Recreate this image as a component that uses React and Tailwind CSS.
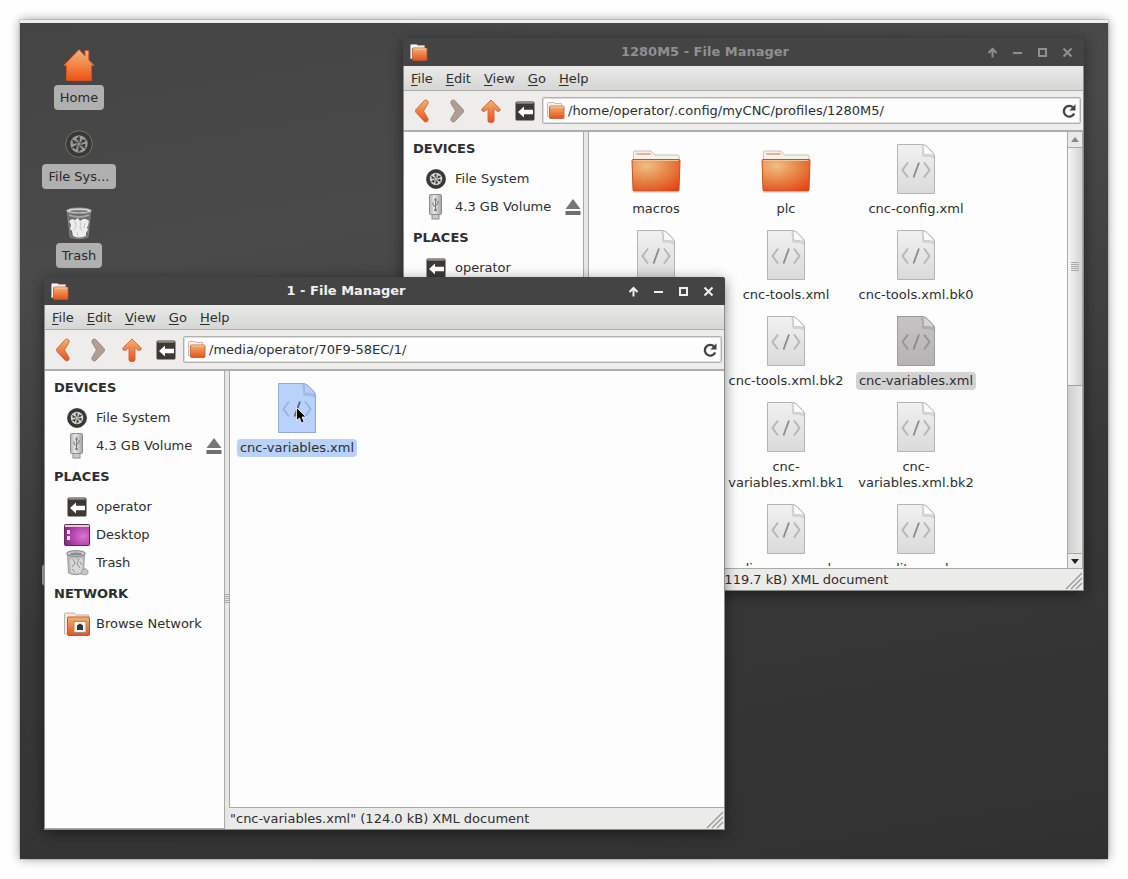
import clsx from "clsx";

function IconDefs() {
  return (
    <svg className="absolute h-0 w-0" aria-hidden="true">
      <defs>
        <linearGradient id="orange" x1="0" y1="0" x2="0" y2="1">
          <stop offset="0" stopColor="#f3b272" />
          <stop offset="1" stopColor="#e8501c" />
        </linearGradient>
        <radialGradient id="folderFront" cx="0.3" cy="0.2" r="1">
          <stop offset="0" stopColor="#f0bf85" />
          <stop offset="0.5" stopColor="#e58243" />
          <stop offset="0.85" stopColor="#e8511f" />
          <stop offset="1" stopColor="#d8431a" />
        </radialGradient>
        <linearGradient id="homeFill" x1="0" y1="0" x2="0" y2="1">
          <stop offset="0" stopColor="#eeb480" />
          <stop offset="0.55" stopColor="#f08242" />
          <stop offset="1" stopColor="#ee4f17" />
        </linearGradient>
        <linearGradient id="page" x1="0" y1="0" x2="0" y2="1">
          <stop offset="0" stopColor="#f1f1f1" />
          <stop offset="1" stopColor="#dadada" />
        </linearGradient>
        <linearGradient id="pageDark" x1="0" y1="0" x2="0" y2="1">
          <stop offset="0" stopColor="#c6c4c5" />
          <stop offset="1" stopColor="#b5b3b4" />
        </linearGradient>
        <linearGradient id="metal" x1="0" y1="0" x2="1" y2="0">
          <stop offset="0" stopColor="#b4b4b4" />
          <stop offset="0.4" stopColor="#e8e8e8" />
          <stop offset="1" stopColor="#a2a2a2" />
        </linearGradient>
        <radialGradient id="screen" cx="0.75" cy="0.55" r="0.8">
          <stop offset="0" stopColor="#d977cc" />
          <stop offset="0.6" stopColor="#b33fae" />
          <stop offset="1" stopColor="#7a2c80" />
        </radialGradient>
      </defs>
    </svg>
  );
}

function FolderIcon() {
  return (
    <svg width="52" height="46" viewBox="0 0 52 46">
      <path d="M3.500 12V4q0-1 1-1H20q1 0 2 1l3 3h23q1 0 1 1v5z" fill="#f7f1ee" stroke="#c9c0bb" />
      <rect x="6" y="5" width="15" height="2" rx="1" fill="#e0b79d" />
      <path d="M2 12.500q0-1 1-1h46q1 0 1 1L49 42q0 1-1 1H4q-1 0-1-1z" fill="url(#folderFront)" stroke="#c9501f" />
      <path d="M3.500 12.500h45" stroke="#f3c295" />
      <path d="M3 44.500h46" stroke="#000" strokeOpacity=".12" />
    </svg>
  );
}

function SmallFolderIcon() {
  return (
    <svg width="18" height="17" viewBox="0 0 18 17">
      <path d="M.500 14.500V1.500q0-1 1-1h5l1.500 1h6.500v13z" fill="#f7f2ef" stroke="#b9aca5" strokeWidth=".8" />
      <path d="M2.500 5q0-1 1-1h12.500q1 0 1 1v10.500q0 1-1 1H3.500q-1 0-1-1z" fill="url(#orange)" stroke="#b95830" strokeWidth=".8" />
      <path d="M3.500 5h13" stroke="#f6cfa8" />
    </svg>
  );
}

function XmlIcon({ tone }) {
  const fill = tone === "blue" ? "#b9d2fb" : tone === "dark" ? "url(#pageDark)" : "url(#page)";
  const edge = tone === "blue" ? "#8fa9d0" : tone === "dark" ? "#9b999a" : "#b4b4b4";
  const ink = tone === "blue" ? "#9db6dd" : tone === "dark" ? "#979596" : "#b7b7b7";
  const fold = tone === "blue" ? "#b4cdf7" : tone === "dark" ? "#d6d5d5" : "#fbfbfb";
  return (
    <svg width="40" height="50" viewBox="0 0 40 50">
      <path d="M1.500 .500H26q3 0 5 2l5.500 5.500q2 2 2 4v37.500h-37z" fill={fill} stroke={edge} />
      <path d="M26 2q1 2 1 4v4.500q0 1.500 1.500 1.500H33q3 0 5 2" fill="none" stroke="#000" strokeOpacity=".1" strokeWidth="2" />
      <path d="M26 1q1.500 1.500 1.500 4v4q0 1.500 1.500 1.500h4q3 0 5 1.500-.500-2.500-2-4L31 3q-2-2-5-2z" fill={fold} stroke={edge} strokeWidth=".6" />
      <path d="M12 18.500L6.500 26l5.500 7.500M28 18.500l5.500 7.500-5.500 7.500" fill="none" stroke={ink} strokeWidth="2" />
      <path d="M23 18.500l-5.500 15" stroke={tone === "blue" ? "#55637e" : "#8a8a8a"} strokeWidth="1.800" />
    </svg>
  );
}

function WheelIcon({ size = 20, faded }) {
  return (
    <svg width={size} height={size} viewBox="0 0 20 20">
      <circle cx="10" cy="10" r="9.500" fill="#3a3834" stroke={faded ? "#77756f" : "#2c2a27"} strokeWidth=".7" />
      <circle cx="10" cy="10" r="6.200" fill={faded ? "#9a9893" : "#d9d8d3"} />
      <circle cx="10" cy="10" r="3.600" fill="none" stroke="#3a3834" strokeWidth="2" strokeDasharray="1.800 1.970" />
      <path d="M10 4.500V15.500M5.200 7.200l9.600 5.600M5.200 12.800l9.600-5.600" stroke="#3a3834" strokeWidth=".8" />
      <circle cx="10" cy="10" r="1.100" fill={faded ? "#9a9893" : "#d9d8d3"} />
    </svg>
  );
}

function UsbIcon() {
  return (
    <svg width="16" height="26" viewBox="0 0 16 26">
      <rect x="1.500" y=".500" width="12" height="20" rx="1" fill="url(#metal)" stroke="#8d8d8d" />
      <rect x="4" y="20.500" width="7" height="4.500" fill="#c9c9c9" stroke="#8d8d8d" />
      <path d="M7.500 16V5M7.500 13L5 11V8.500M7.500 11.500L10 9.500V7" fill="none" stroke="#777" />
      <circle cx="7.500" cy="16" r="1.300" fill="#777" />
      <path d="M6 6.500l1.500-3 1.500 3z" fill="#777" />
    </svg>
  );
}

function EjectIcon() {
  return (
    <svg width="16" height="18" viewBox="0 0 16 18">
      <path d="M8 1l7.500 10H.500z" fill="#777" />
      <rect x=".500" y="13" width="15" height="4" fill="#6f6f6f" />
    </svg>
  );
}

function HomeFolderIcon() {
  return (
    <svg width="20" height="20" viewBox="0 0 20 20">
      <rect x=".500" y=".500" width="19" height="19" rx="1.500" fill="#3c3935" />
      <path d="M1.500 1h17v1.800h-17z" fill="#8e8a83" />
      <path d="M3 11l6-5.500v3.300h9v4.400H9v3.300z" fill="#fff" />
    </svg>
  );
}

function DesktopIcon() {
  return (
    <svg width="26" height="22" viewBox="0 0 26 22">
      <rect x=".500" y=".500" width="25" height="21" rx="1" fill="url(#screen)" stroke="#5e2a60" />
      <path d="M1 1h24v2H1z" fill="#ddd4c6" />
      <path d="M3 6h3v4H3zM3 12h3v4H3z" fill="#f0dff0" />
    </svg>
  );
}

function TrashIcon() {
  return (
    <svg width="24" height="26" viewBox="0 0 24 26">
      <path d="M2.500 4l1 19q7 3.500 15 0l1-19z" fill="#bdbdbd" stroke="#8a8a8a" strokeWidth=".8" />
      <path d="M5 10l4-2 3 2 4-2 2 2-1 12q-5 2-11 0z" fill="#d8d8d8" />
      <path d="M8 9l2 4-3 4M14 9l-2 5 3 4M7 19l3 3M15 12l2 3" stroke="#8e8e8e" fill="none" />
      <path d="M17 20l3-1.500 3 2v3L20 25l-4-1z" fill="#c4c4c4" stroke="#8e8e8e" strokeWidth=".7" />
      <ellipse cx="11" cy="3.500" rx="9.500" ry="2.800" fill="#c9c9c9" stroke="#7d7d7d" />
      <ellipse cx="11" cy="3.800" rx="6.500" ry="1.200" fill="#8a8a8a" />
    </svg>
  );
}

function BigTrashIcon() {
  return (
    <svg width="28" height="33" viewBox="0 0 28 33">
      <path d="M2.500 5l2.500 25q9 3.500 18 0l2.500-25z" fill="#8a8d8c" fillOpacity=".5" stroke="#8f9190" strokeWidth=".8" />
      <path d="M4 8q10 4 20 0" stroke="#c7c9c8" strokeOpacity=".6" fill="none" strokeWidth="2" />
      <path d="M4 14l3-2 3 1 3-2 2 3 3-2 3 0 3 2-1 5-1 1 1 3-2 3v3q-7 3-13 0l-1-5-2-2 1-4z" fill="#ececec" />
      <path d="M10 14l1 5-2 4M16 15l-1 5 2 4M12 25l1 4M20 16l-1 5" stroke="#c4c4c4" fill="none" />
      <ellipse cx="14" cy="3.800" rx="12.500" ry="2.800" fill="#d3d5d4" stroke="#9a9c9b" strokeWidth=".8" />
      <ellipse cx="14" cy="4.200" rx="9" ry="1.300" fill="#7b7d7c" />
    </svg>
  );
}

function NetworkIcon() {
  return (
    <svg width="26" height="24" viewBox="0 0 26 24">
      <path d="M.500 22V2q0-1 1-1H10l2 2h12.500v18z" fill="#f1ebe6" stroke="#bdb0a8" />
      <path d="M3.500 6q0-1 1-1h20q1 0 1 1v16.500q0 1-1 1h-20q-1 0-1-1z" fill="url(#orange)" stroke="#c4562b" />
      <rect x="10" y="9.500" width="12" height="11" fill="#f5f3ef" stroke="#9a8f86" />
      <path d="M13 18v-4.500l3-2 3 2V18z" fill="#35322f" />
    </svg>
  );
}

function HouseIcon() {
  return (
    <svg width="32" height="34" viewBox="0 0 32 34">
      <path d="M16 1.500L.800 17.500H3.500V32.500H28.500V17.500H31.200L25.800 12V2.500H22v5.500z" fill="url(#homeFill)" stroke="#d9541f" strokeWidth=".9" strokeLinejoin="round" />
    </svg>
  );
}

function BackIcon({ forward }) {
  return (
    <svg width="14" height="24" viewBox="0 0 14 24" className={forward ? "rotate-180" : ""}>
      <path
        d="M9.500 1.300L1 10.500q-1 1.500 0 3l8.500 9.200q1.500.800 3-.500 1-1.200.500-2.700L8.500 12l4.500-7.500q.500-1.500-.500-2.700-1.500-1.300-3-.500z"
        fill={forward ? "#b09d93" : "url(#orange)"}
        stroke={forward ? "#98857b" : "#c8683a"}
        strokeWidth=".9"
      />
    </svg>
  );
}

function UpIcon() {
  return (
    <svg width="20" height="24" viewBox="0 0 20 24">
      <path d="M10 1L.800 10q-.500 2.500 2.500 2.500l3.700-3V22q0 1.500 3 1.500t3-1.500V9.500l3.700 3q3 0 2.500-2.500z" fill="url(#orange)" stroke="#c8683a" strokeWidth=".9" strokeLinejoin="round" />
    </svg>
  );
}

function ReloadIcon() {
  return (
    <svg width="14" height="14" viewBox="0 0 14 14">
      <path d="M11 3.300A5.400 5.400 0 1 0 12.200 9.500" fill="none" stroke="#444" strokeWidth="2.300" />
      <path d="M13.500 .300v6.200H7.300z" fill="#444" />
    </svg>
  );
}

const titleButtons = [
  { label: "Shade", path: "M5.500 10.500V3M1.500 6l4-4 4 4" },
  { label: "Minimize", path: "M1 6h9" },
  { label: "Maximize", path: "M2 2h7v7h-7z" },
  { label: "Close", path: "M1.500 1.500l8 8M9.500 1.500l-8 8" },
];

function TitleBar({ title, active }) {
  return (
    <header className={clsx("flex h-7 shrink-0 items-center bg-[#444] pr-1 pl-[7px]", active ? "text-[#f0f0f0]" : "text-[#909090]")}>
      <div className="w-5">
        <SmallFolderIcon />
      </div>
      <h1 className="flex-1 text-center text-[13px] leading-4 font-bold">{title}</h1>
      {titleButtons.map((button) => (
        <button key={button.label} aria-label={button.label} className="flex h-7 w-[25px] items-center justify-center">
          <svg width="11" height="11" viewBox="0 0 11 11" fill="none" stroke="currentColor" strokeWidth="2">
            <path d={button.path} />
          </svg>
        </button>
      ))}
    </header>
  );
}

function MenuBar() {
  return (
    <nav className="flex h-[25px] shrink-0 items-center gap-[13px] border-b border-[#adadaa] bg-linear-to-b from-[#eaeae9] to-[#d6d6d4] px-[7px] pt-0.5">
      {["File", "Edit", "View", "Go", "Help"].map((item) => (
        <button key={item}>
          <span className="underline underline-offset-2">{item[0]}</span>
          {item.slice(1)}
        </button>
      ))}
    </nav>
  );
}

function ToolBar({ path }) {
  return (
    <div className="flex h-[39px] shrink-0 items-center bg-[#eeedec] pr-0.5">
      <button aria-label="Back" className="flex w-[35px] justify-center">
        <BackIcon />
      </button>
      <button aria-label="Forward" className="flex w-[35px] justify-center">
        <BackIcon forward />
      </button>
      <button aria-label="Up" className="flex w-[33px] justify-center">
        <UpIcon />
      </button>
      <button aria-label="Home" className="flex w-[35px] justify-center">
        <HomeFolderIcon />
      </button>
      <div className="flex h-[27px] flex-1 items-center gap-[3px] rounded-[2px] border border-[#b3b1ad] bg-[#fdfdfd] px-1 shadow-[inset_0_0_0_1px_#dededc]">
        <SmallFolderIcon />
        <input aria-label="Location" defaultValue={path} className="h-5 min-w-0 flex-1 bg-transparent outline-none" />
        <button aria-label="Reload">
          <ReloadIcon />
        </button>
      </div>
    </div>
  );
}

const sections = [
  {
    title: "DEVICES",
    items: [
      { label: "File System", icon: <WheelIcon /> },
      { label: "4.3 GB Volume", icon: <UsbIcon />, eject: true },
    ],
  },
  {
    title: "PLACES",
    items: [
      { label: "operator", icon: <HomeFolderIcon /> },
      { label: "Desktop", icon: <DesktopIcon /> },
      { label: "Trash", icon: <TrashIcon /> },
    ],
  },
  {
    title: "NETWORK",
    items: [{ label: "Browse Network", icon: <NetworkIcon /> }],
  },
];

function Sidebar() {
  return (
    <aside className="flex w-[180px] shrink-0 flex-col gap-px overflow-hidden border-r border-b border-[#a9a9a6] bg-[#fdfdfd] pt-px">
      {sections.map((section) => (
        <section key={section.title}>
          <h2 className="flex h-8 items-center pl-[9px] font-bold">{section.title}</h2>
          <ul>
            {section.items.map((item) => (
              <li key={item.label} className="flex h-7 items-center pr-0.5 pl-[19px]">
                <a href="#" className="flex flex-1 items-center gap-1.5">
                  <span className="flex w-[26px] justify-center">{item.icon}</span>
                  {item.label}
                </a>
                {item.eject && (
                  <button aria-label="Eject">
                    <EjectIcon />
                  </button>
                )}
              </li>
            ))}
          </ul>
        </section>
      ))}
    </aside>
  );
}

function FileItem({ name, folder, tone }) {
  return (
    <li className="flex flex-col items-center">
      <div className="flex h-[50px] items-end">{folder ? <FolderIcon /> : <XmlIcon tone={tone} />}</div>
      <div
        className={clsx(
          "mt-1.5 max-w-[126px] rounded-[4px] px-[3px] py-px text-center",
          tone === "dark" && "bg-[#d3d1d2]",
          tone === "blue" && "bg-[#b9d2fb]"
        )}
      >
        {name}
      </div>
    </li>
  );
}

function ScrollBar() {
  return (
    <div className="flex w-4 shrink-0 flex-col border-x border-[#a9a9a6] bg-linear-to-r from-[#cfcfcc] to-[#e8e8e6]">
      <button aria-label="Scroll up" className="flex h-4 items-center justify-center border-b border-[#a9a9a6] bg-[#e9e9e8]">
        <svg width="8" height="5" viewBox="0 0 8 5">
          <path d="M4 0l4 5H0z" fill="#888" />
        </svg>
      </button>
      <div className="flex h-[238px] flex-col items-center justify-center gap-px border-b border-[#a0a09d] bg-linear-to-r from-[#f6f6f5] to-[#d2d2d0]">
        {[0, 1, 2, 3, 4].map((line) => (
          <span key={line} className="h-px w-2 bg-[#a9a9a6]" />
        ))}
      </div>
      <div className="flex-1" />
      <button aria-label="Scroll down" className="flex h-[15px] items-center justify-center border-t border-[#a9a9a6] bg-[#e9e9e8]">
        <svg width="8" height="5" viewBox="0 0 8 5">
          <path d="M4 5l4-5H0z" fill="#222" />
        </svg>
      </button>
    </div>
  );
}

function StatusBar({ text }) {
  return (
    <footer className="flex h-[21px] shrink-0 items-center justify-between bg-[#ebebea] pt-px pl-px">
      <span>{text}</span>
      <svg width="18" height="18" viewBox="0 0 18 18" stroke="#9d9d9a" className="self-end">
        <path d="M1 17L17 1M6 17L17 6M11 17l6-6" strokeWidth="1.500" />
      </svg>
    </footer>
  );
}

function FileWindow({ title, active, path, files, status, scroll, className, children }) {
  return (
    <div
      className={clsx(
        "absolute flex h-[553px] w-[681px] flex-col overflow-hidden rounded-t-[2px] shadow-[0_3px_14px_rgba(0,0,0,0.45)]",
        className
      )}
    >
      <TitleBar title={title} active={active} />
      <div className="flex min-h-0 flex-1 flex-col border-x border-b border-[#8c8c88]">
        <MenuBar />
        <ToolBar path={path} />
        <div className="flex min-h-0 flex-1 border-t-2 border-[#adadaa]">
          <Sidebar />
          <div className="flex w-1 shrink-0 flex-col items-center justify-center gap-px bg-[#e6e6e4] pb-1">
            {[0, 1, 2, 3, 4].map((line) => (
              <span key={line} className="h-px w-1 bg-[#a9a9a6]" />
            ))}
          </div>
          <div className="flex min-w-0 flex-1 flex-col">
            <main className="flex min-h-0 flex-1 border-b border-l border-[#a9a9a6] bg-[#fdfdfd]">
              <ul className="relative mb-0.5 grid min-w-0 flex-1 auto-rows-max grid-cols-[repeat(auto-fill,130px)] gap-y-3 overflow-hidden pt-3 pl-0.5">
                {files.map((file) => (
                  <FileItem key={file.name} {...file} />
                ))}
                {children}
              </ul>
              {scroll && <ScrollBar />}
            </main>
            <StatusBar text={status} />
          </div>
        </div>
      </div>
    </div>
  );
}

const profileFiles = [
  { name: "macros", folder: true },
  { name: "plc", folder: true },
  { name: "cnc-config.xml" },
  { name: "cnc-gui.xml" },
  { name: "cnc-tools.xml" },
  { name: "cnc-tools.xml.bk0" },
  { name: "cnc-tools.xml.bk1" },
  { name: "cnc-tools.xml.bk2" },
  { name: "cnc-variables.xml", tone: "dark" },
  { name: "cnc-variables.xml.bk0" },
  { name: "cnc-variables.xml.bk1" },
  { name: "cnc-variables.xml.bk2" },
  { name: "config.xml" },
  { name: "dispenser.xml" },
  { name: "editor.xml" },
];

const mediaFiles = [{ name: "cnc-variables.xml", tone: "blue" }];

function Shortcut({ label, children }) {
  return (
    <li className="flex h-[79px] flex-col items-center">
      <div className="flex h-10 items-center pt-1">{children}</div>
      <a href="#" className="mt-0.5 rounded-[4px] bg-[#b0b0b0] px-1.5 py-1 leading-[17px] text-[#2a2a2a]">
        {label}
      </a>
    </li>
  );
}

export default function App() {
  return (
    <div className="flex h-screen bg-[#fefefe] p-5 font-['DejaVu_Sans',sans-serif] text-[13px] leading-4 text-[#2e2e2e]">
      <IconDefs />
      <div className="relative flex-1 overflow-hidden border-t-[3px] border-[#eee] bg-[linear-gradient(170deg,#444_0%,#4a4a4a_25%,#383838_60%,#313131_100%)] outline-1 outline-black/10 shadow-[0_0_10px_rgba(0,0,0,0.4)]">
        <ul className="flex w-[118px] flex-col pt-5">
          <Shortcut label="Home">
            <HouseIcon />
          </Shortcut>
          <Shortcut label="File Sys...">
            <WheelIcon size={28} faded />
          </Shortcut>
          <Shortcut label="Trash">
            <BigTrashIcon />
          </Shortcut>
          <li className="mx-auto mt-[284px] h-[22px] w-[74px] rounded-[4px] bg-[#b0b0b0]" />
        </ul>

        <FileWindow
          className="top-[15px] left-[383px]"
          title="1280M5 - File Manager"
          path="/home/operator/.config/myCNC/profiles/1280M5/"
          files={profileFiles}
          status={'"cnc-variables.xml" (119.7 kB) XML document'}
          scroll
        />

        <FileWindow
          className="top-[254px] left-[24px]"
          title="1 - File Manager"
          active
          path="/media/operator/70F9-58EC/1/"
          files={mediaFiles}
          status={'"cnc-variables.xml" (124.0 kB) XML document'}
        >
          <svg width="12" height="18" viewBox="0 0 12 18" className="absolute top-9 left-[66px]">
            <path d="M.500 .500v13l3-2.500 2 5 2.500-1-2-5h4z" fill="#000" stroke="#fff" strokeWidth=".8" />
          </svg>
        </FileWindow>
      </div>
    </div>
  );
}
